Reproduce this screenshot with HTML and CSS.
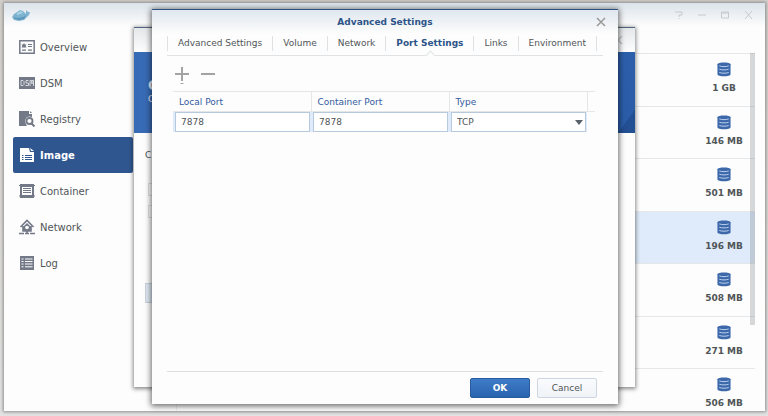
FILE: index.html
```html
<!DOCTYPE html>
<html lang="en">
<head>
<meta charset="utf-8">
<title>Docker</title>
<link rel="stylesheet" href="styles.css">
</head>
<body>
<svg class="defs" aria-hidden="true">
  <symbol id="disk" viewBox="0 0 14 16">
    <path fill="#3d69ab" d="M0 2.500C0-.3 14-.3 14 2.500V13c0 3-14 3-14 0z"/>
    <path fill="none" stroke="#c4d8f2" d="M2 4.200c3 1 7 1 10 0M2 7.700c3 1 7 1 10 0M2 11.200c3 1 7 1 10 0"/>
  </symbol>
  <symbol id="close" viewBox="0 0 10 10">
    <path fill="none" stroke="currentColor" stroke-width="1.500" d="M1 1l8 8M9 1L1 9"/>
  </symbol>
</svg>

<main class="window app">
  <header class="app-bar">
    <svg class="whale" viewBox="0 0 18 12" aria-hidden="true">
      <path fill="#7fb4d0" d="M0 8l2-3 3-2 3-2 3 1 2 2 1 1V1l2 2 2 0-1 3-2 2-3 3-5 1-5-1z"/>
      <path fill="#5b97bd" d="M2 8l4 1 5-1 3-2-2 4-5 1-4-1z"/>
      <path fill="#a9d3e5" d="M5 4l4-2 2 2-6 2z"/>
    </svg>
    <div class="app-controls">
      <button aria-label="Help"><svg viewBox="0 0 10 10"><path d="M1 2h7v3H5v2M5 8v1"/></svg></button>
      <button aria-label="Minimize"><svg viewBox="0 0 10 10"><path d="M1 5h8"/></svg></button>
      <button aria-label="Maximize"><svg viewBox="0 0 10 10"><path d="M1.500 2h7v6h-7zM1.500 3h7"/></svg></button>
      <button aria-label="Close"><svg viewBox="0 0 10 10"><path d="M2 1l7 8M9 1L2 9"/></svg></button>
    </div>
  </header>
  <div class="app-body">
    <nav class="side">
      <a href="#overview"><svg viewBox="0 0 16 14"><path fill="none" stroke="currentColor" stroke-width="1.500" d="M.8.800h14.400v12.400H.800z"/><path fill="currentColor" d="M5 3l1 1.500h1.500L6.700 6l.8 1.500H2.500L3.300 6l-.8-1.500H4zM9 4h4v1H9zM9 6h4v1H9zM3 9.500h4v1.200H3zM9 9.500h4v1.200H9z"/></svg>Overview</a>
      <a href="#dsm"><svg viewBox="0 0 16 14"><path fill="currentColor" d="M0 1h16v12H0z"/><path fill="none" stroke="#d6d9de" d="M2 4.500h2l1 1v3l-1 1H2zM9.500 4.500H7V7h2.500v2.500H6.500M11 10V4.500h1.500L13 8V4.500h1.500V10"/></svg>DSM</a>
      <a href="#registry"><svg viewBox="0 0 16 16"><path fill="currentColor" d="M0 0h10v3h3v3C8 4 5 8 7 13l1 2H0z"/><path fill="currentColor" d="M11 0v2h2z"/><circle cx="10.500" cy="10" r="3" fill="#fff" stroke="currentColor" stroke-width="1.800"/><path stroke="currentColor" stroke-width="2" d="M12.500 12.500l3 3"/></svg>Registry</a>
      <a class="current" href="#image" aria-current="page"><svg viewBox="0 0 16 16"><path fill="currentColor" d="M1 1h9l1 4h4v10H1z"/><path fill="currentColor" d="M11 1l4 3h-3z"/><path stroke="#2f568f" d="M3 8.500h1.500M6 8.500h7M3 10.500h1.500M6 10.500h7M3 12.500h1.500M6 12.500h7"/></svg>Image</a>
      <a href="#container"><svg viewBox="0 0 16 14"><path fill="currentColor" d="M1 0h14v3H1zM1 11h14v3H1zM1 3h2v8H1zM13 3h2v8h-2z"/><path stroke="currentColor" stroke-width="1.200" d="M4 4.500h8M4 6.500h8M4 8.500h8M0 1.500h16M0 12h16"/></svg>Container</a>
      <a href="#network"><svg viewBox="0 0 16 16"><path fill="none" stroke="currentColor" stroke-width="1.600" d="M1.500 8L8 1.500 14.500 8M4 7v5h8V7M8 11v3"/><path fill="currentColor" d="M8 4l4 4v4H4V8z"/><circle cx="8" cy="8.500" r="1.800" fill="#fff"/><path stroke="currentColor" stroke-width="1.500" d="M0 14.500h5M6 14.500h4M11 14.500h5"/></svg>Network</a>
      <a href="#log"><svg viewBox="0 0 16 14"><path fill="currentColor" d="M1 0h14v14H1z"/><path stroke="#fff" d="M2.500 3h2M6 3h7.500M2.500 5.500h2M6 5.500h7.500M2.500 8h2M6 8h7.500M2.500 10.800h2M6 10.800h7.500"/></svg>Log</a>
    </nav>
    <section class="list-pane" aria-label="Images">
      <ul class="list">
        <li><span class="size"><svg><use href="#disk"/></svg>1 GB</span></li>
        <li><span class="size"><svg><use href="#disk"/></svg>146 MB</span></li>
        <li><span class="size"><svg><use href="#disk"/></svg>501 MB</span></li>
        <li class="selected"><span class="size"><svg><use href="#disk"/></svg>196 MB</span></li>
        <li><span class="size"><svg><use href="#disk"/></svg>508 MB</span></li>
        <li><span class="size"><svg><use href="#disk"/></svg>271 MB</span></li>
        <li><span class="size"><svg><use href="#disk"/></svg>506 MB</span></li>
      </ul>
      <div class="scroll-thumb"></div>
    </section>
  </div>
</main>

<section class="window wizard" aria-label="Container">
  <div class="wizard-bar"><svg class="x"><use href="#close"/></svg></div>
  <div class="banner"><strong>C</strong><span>C</span></div>
  <div class="wizard-body">
    <span>C</span>
    <i class="box"></i>
    <i class="box"></i>
    <i class="stub"></i>
  </div>
</section>

<section class="window dialog" role="dialog" aria-labelledby="dialog-title">
  <header class="dialog-bar">
    <h1 id="dialog-title">Advanced Settings</h1>
    <button class="close" aria-label="Close"><svg class="x"><use href="#close"/></svg></button>
  </header>
  <nav class="tabs">
    <a href="#advanced">Advanced Settings</a>
    <a href="#volume">Volume</a>
    <a href="#net">Network</a>
    <a class="active" href="#port" aria-current="true">Port Settings</a>
    <a href="#links">Links</a>
    <a href="#environment">Environment</a>
  </nav>
  <div class="content">
    <div class="tools">
      <button aria-label="Add"><svg viewBox="0 0 16 18"><path fill="none" stroke="#a3a3a3" stroke-width="2" d="M1 8h14M8 1v14"/><path stroke="#a3a3a3" d="M6.500 17.500h3"/></svg></button>
      <button aria-label="Remove"><svg viewBox="0 0 16 18"><path stroke="#a3a3a3" stroke-width="2" d="M1 8h14"/></svg></button>
    </div>
    <table class="ports">
      <thead><tr><th id="local">Local Port</th><th id="cont">Container Port</th><th id="type">Type</th><th class="spare"></th></tr></thead>
      <tbody><tr>
        <td><input type="text" value="7878" aria-labelledby="local"></td>
        <td><input type="text" value="7878" aria-labelledby="cont"></td>
        <td class="pick"><select aria-labelledby="type"><option>TCP</option></select></td>
        <td class="spare"></td>
      </tr></tbody>
    </table>
  </div>
  <footer class="actions">
    <button class="ok">OK</button>
    <button class="cancel">Cancel</button>
  </footer>
</section>
</body>
</html>
```
FILE: styles.css
```css
* { box-sizing: border-box; }

body {
  margin: 0;
  min-height: 100vh;
  background: linear-gradient(#d3cfca, #e3e3e3);
  color: #505558;
  font-family: "DejaVu Sans", Verdana, sans-serif;
  font-size: 9px;
  overflow: hidden;
}

a { color: inherit; text-decoration: none; }

button {
  padding: 0;
  border: 0;
  background: none;
  color: inherit;
  font: inherit;
}

.defs { position: absolute; width: 0; height: 0; }

.window {
  position: absolute;
  display: flex;
  flex-direction: column;
  background: #fdfdfd;
}

/* Main window */
.app {
  inset: 3px 3px 5px 4px;
  overflow: hidden;
  box-shadow: 0 0 3px 1px #8c8c8c;
}

.app-bar {
  display: flex;
  flex: none;
  align-items: center;
  justify-content: space-between;
  height: 24px;
  padding: 0 12px 0 8px;
  background: linear-gradient(#dbe3ea, #fdfdfd);
}

.whale { width: 18px; height: 12px; }

.app-controls { display: flex; gap: 13px; }

.app-controls button { display: flex; }

.app-controls svg {
  width: 10px;
  height: 10px;
  fill: none;
  stroke: #c6cacd;
}

.app-body { display: flex; flex: 1; min-height: 0; }

.side {
  flex: none;
  width: 172px;
  padding: 2px 43px 0 9px;
  font-size: 10px;
}

.side a {
  display: flex;
  align-items: center;
  gap: 5px;
  height: 36px;
  padding-left: 6px;
  border-radius: 2px;
}

.side svg { width: 16px; height: 16px; color: #737987; }

.side .current {
  background: #2f568f;
  color: #fff;
  font-weight: bold;
}

.side .current svg { color: #fff; }

.list-pane {
  position: relative;
  flex: 1;
  margin: 26px 10px 0 0;
  border-left: 1px solid #eee;
}

.list {
  display: flex;
  flex-direction: column;
  height: 368px;
  margin: 0;
  padding: 0;
  list-style: none;
}

.list li {
  display: flex;
  flex: 1;
  justify-content: flex-end;
  padding: 8px 5px 0 0;
  border-top: 1px solid #e5e7e8;
}

.list .selected { background: #dfebfa; }

.size {
  display: flex;
  flex-direction: column;
  align-items: center;
  gap: 5px;
  width: 52px;
  font-size: 9px;
  line-height: 12px;
  font-weight: bold;
}

.size svg { width: 14px; height: 15px; }

.scroll-thumb {
  position: absolute;
  top: 0;
  right: 0;
  width: 5px;
  height: 272px;
  background: rgba(110, 115, 120, .27);
}

/* Wizard window */
.wizard {
  inset: 27px 133px 29px 134px;
  border-top: 1px solid #53657e;
  box-shadow: 0 1px 4px 1px rgba(0, 0, 0, .45);
}

.wizard-bar {
  display: flex;
  align-items: center;
  justify-content: flex-end;
  height: 24px;
  padding-right: 12px;
  background: linear-gradient(#e4e7ea, #fdfdfd);
  color: #c4c6c8;
}

.banner {
  display: flex;
  flex-direction: column;
  gap: 2px;
  height: 81px;
  padding: 27px 14px;
  background: linear-gradient(125deg, #386bb5 50%, #2a5ca8 97%, #234f93 97%);
  color: #e8f0fa;
  line-height: 12px;
}

.banner strong { font-size: 14px; }

.wizard-body {
  display: flex;
  flex-direction: column;
  padding: 16px 11px;
}

.wizard-body span { line-height: 12px; }

.box {
  width: 20px;
  height: 13px;
  margin: 22px 0 0 3px;
  border: 1px solid #dfe1e3;
}

.box + .box { margin-top: 9px; }

.stub {
  width: 60px;
  height: 20px;
  margin-top: 65px;
  border: 1px solid #c8d1db;
  background: #dfe9f3;
}

.x { width: 10px; height: 10px; }

/* Settings dialog */
.dialog {
  inset: 9px 150px 12px 152px;
  border-top: 1px solid #30517f;
  box-shadow: 0 1px 6px 1px rgba(0, 0, 0, .6);
}

.dialog-bar {
  display: flex;
  align-items: center;
  height: 24px;
  padding: 0 12px 0 22px;
  background: linear-gradient(#dfe7ef, #fdfdfd);
}

h1 {
  flex: 1;
  margin: 0;
  color: #2d5489;
  font-size: 9px;
  text-align: center;
}

.close { display: flex; color: #999; }

.tabs {
  display: flex;
  margin: 0 15px;
  border-bottom: 1px solid #e0e3e5;
  line-height: 15px;
  padding: 2px 0 4px;
}

.tabs a {
  padding: 0 10px;
  border-right: 1px solid #dfe2e4;
  white-space: nowrap;
}

.tabs a:first-child { border-left: 1px solid #dfe2e4; }

.tabs .active { position: relative; color: #2d5489; font-weight: bold; }

.tabs .active::after {
  content: "";
  position: absolute;
  bottom: -8px;
  left: 50%;
  width: 6px;
  height: 6px;
  margin-left: -3px;
  border: 1px solid #e0e3e5;
  border-width: 1px 0 0 1px;
  background: #fdfdfd;
  transform: rotate(45deg);
}

.content { flex: 1; padding: 10px 23px 0 21px; }

.tools { display: flex; gap: 10px; height: 25px; padding-left: 1px; }

.tools button { height: 18px; }

.tools svg { display: block; width: 16px; height: 18px; }

.ports {
  width: 100%;
  border-collapse: collapse;
  table-layout: fixed;
  border-top: 1px solid #e4e6e8;
}

.ports th {
  height: 20px;
  padding: 0 6px;
  border-right: 1px solid #e4e6e8;
  border-bottom: 1px solid #e4e6e8;
  color: #345b9f;
  font-weight: normal;
  text-align: left;
}

.ports th.spare { border-right: 0; }

.ports .spare { width: 8px; padding: 0; }

.ports td {
  padding: 0 1px 0 2px;
  background: #dfebfa;
}

.ports td.spare { background: none; }

.ports input,
.ports select {
  display: block;
  width: 100%;
  height: 20px;
  margin: 0;
  padding: 0 5px;
  border: 1px solid #b7c9dc;
  border-radius: 0;
  background: #fff;
  color: #505558;
  font: inherit;
}

.ports select { appearance: none; }

.pick { position: relative; }

.pick::after {
  content: "";
  position: absolute;
  top: 8px;
  right: 4px;
  border: 4px solid transparent;
  border-top: 5px solid #59616b;
  border-bottom: 0;
  pointer-events: none;
}

.actions {
  display: flex;
  justify-content: flex-end;
  gap: 7px;
  margin: 0 15px;
  padding: 6px 6px 6px 0;
  border-top: 1px solid #dcdee0;
}

.actions button {
  width: 60px;
  height: 20px;
  border-radius: 2px;
}

.actions .ok {
  border: 1px solid #2a5b9f;
  background: linear-gradient(#3f7cc9, #2863ae);
  color: #fff;
  font-weight: bold;
}

.actions .cancel {
  border: 1px solid #cdd6e0;
  background: linear-gradient(#fafbfd, #eff3f7);
}
```
